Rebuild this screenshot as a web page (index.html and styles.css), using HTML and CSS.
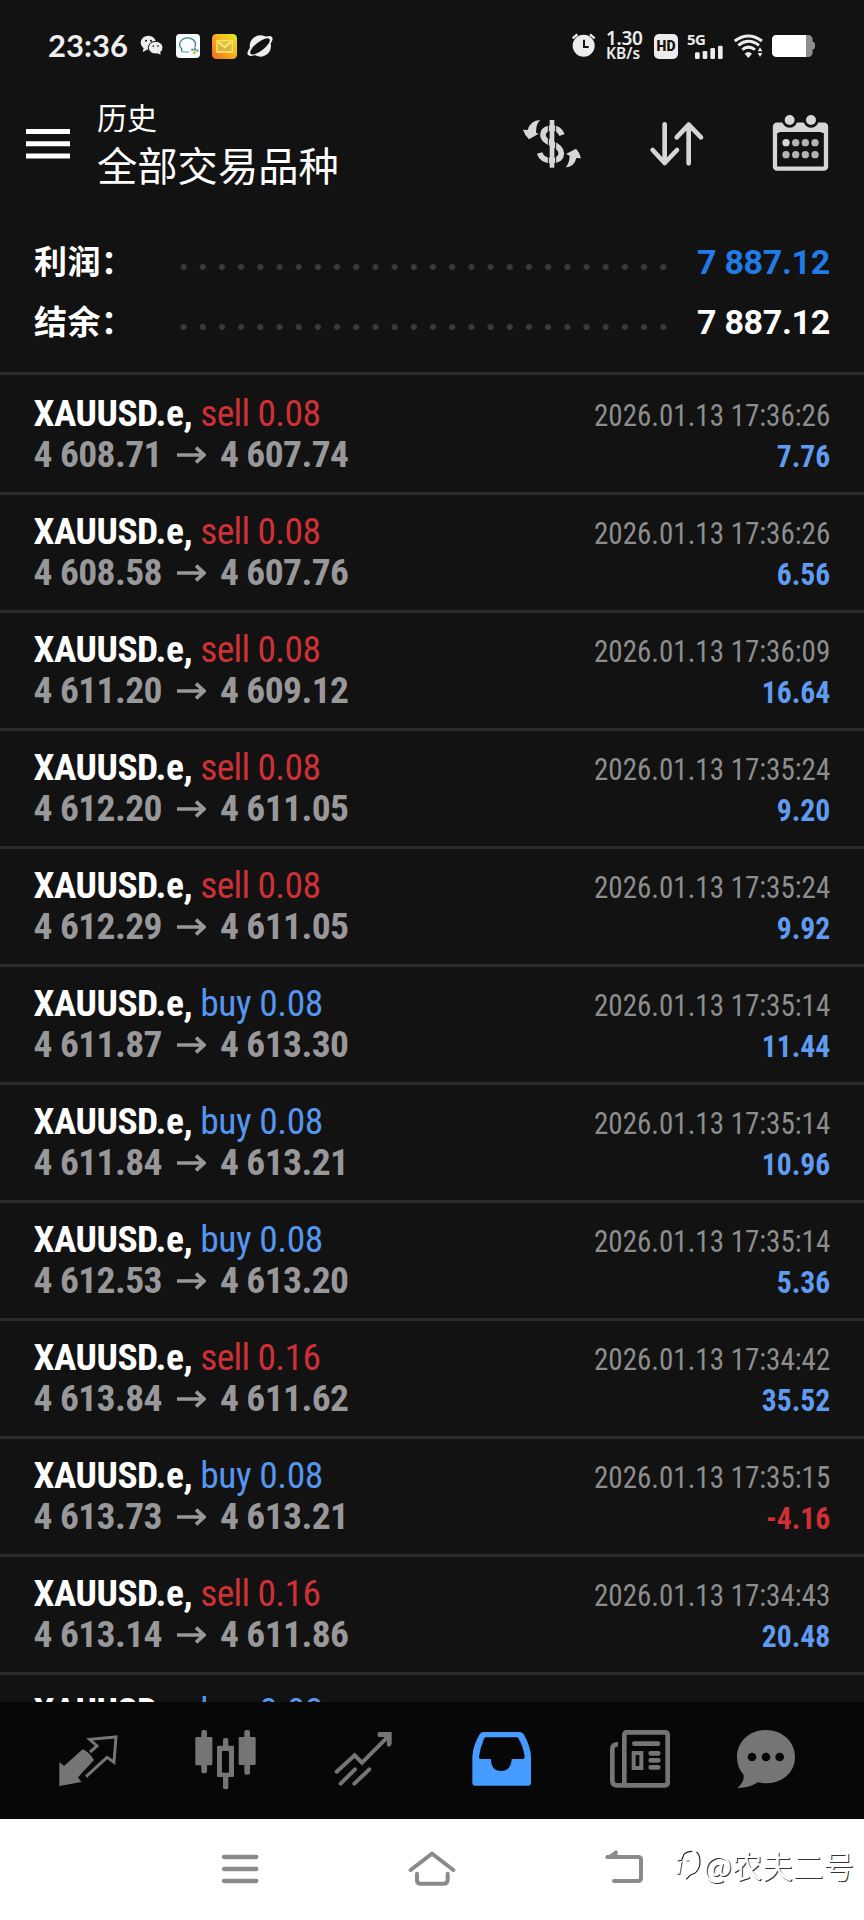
FILE: index.html
```html
<!DOCTYPE html>
<html lang="zh-CN">
<head>
<meta charset="utf-8">
<title>历史</title>
<link rel="stylesheet" href="styles.css">
</head>
<body>
<div class="statusbar">
  <div class="status-left">
    <span class="clock">23:36</span>
    <svg class="ic wechat" width="24" height="24" viewBox="423 105 72 72"><g fill="#ededed"><ellipse cx="448" cy="131" rx="23" ry="21"/><path d="M434 146l-3 13 14-7z"/></g><ellipse cx="470" cy="146" rx="22" ry="19" fill="#ededed" stroke="#121212" stroke-width="3"/><path d="M474 162l11 5-2-10z" fill="#ededed"/><g fill="#121212"><circle cx="441" cy="125" r="3"/><circle cx="456" cy="125" r="3"/><circle cx="463" cy="141" r="2.6"/><circle cx="477" cy="141" r="2.6"/></g></svg>
    <svg class="ic app" width="24" height="24" viewBox="0 0 72 72"><rect width="72" height="72" rx="11" fill="#fbfdfd"/><path d="M17 53V45A24 20 0 1 1 56 41" fill="none" stroke="#3f7fa0" stroke-width="4"/><path d="M17 54h23" stroke="#8cb9a8" stroke-width="4"/><circle cx="57" cy="46" r="4" fill="#5a8d9a"/><circle cx="64" cy="50" r="4" fill="#7fb08a"/><circle cx="55" cy="56" r="5" fill="#d8c94e"/><circle cx="49" cy="47" r="3.5" fill="#3f9aa0"/></svg>
    <svg class="ic mail" width="25" height="25" viewBox="0 0 75 75"><defs><linearGradient id="mailbg" x1="0" y1="1" x2="1" y2="0"><stop offset="0" stop-color="#ec6c25"/><stop offset=".5" stop-color="#f6ab1c"/><stop offset="1" stop-color="#e3ee2a"/></linearGradient></defs><rect width="75" height="75" rx="13" fill="url(#mailbg)"/><rect x="15" y="20" width="46" height="34" fill="#d9b545" stroke="#fbe25a" stroke-width="5"/><path d="M18 24l20 16 20-16" fill="#e8c33c" stroke="#fff06a" stroke-width="5"/></svg>
    <svg class="ic planet" width="26" height="24" viewBox="0 0 78 72"><circle cx="40" cy="36" r="32" fill="#eee"/><ellipse cx="39" cy="36" rx="45" ry="17" transform="rotate(-36 39 36)" fill="#eee"/><ellipse cx="39" cy="37" rx="36" ry="13" transform="rotate(-38 39 37)" fill="#121212"/></svg>
  </div>
  <div class="status-right">
    <svg width="26" height="26" viewBox="417 102 78 78"><circle cx="455" cy="140" r="33" fill="#ececec"/><path d="M422 118l14-12M488 118l-14-12" stroke="#ececec" stroke-width="7"/><path d="M456 122v22h14" fill="none" stroke="#121212" stroke-width="6"/></svg>
    <div class="speed"><span class="num">1.30</span><span class="unit">KB/s</span></div>
    <div class="hd">HD</div>
    <div class="signal"><span>5G</span><svg width="30" height="14" viewBox="0 0 90 42"><g fill="#ececec"><rect x="3" y="22" width="14" height="20" rx="4"/><rect x="26" y="18" width="14" height="24" rx="4"/><rect x="49" y="9" width="14" height="33" rx="4"/><rect x="72" y="2" width="14" height="40" rx="4"/></g></svg></div>
    <svg class="wifi" width="30" height="25" viewBox="904 102 90 75"><g fill="none" stroke="#ececec" stroke-width="9"><path d="M909 123Q950 93 991 123"/><path d="M920 136Q950 112 982 136"/><path d="M932 149Q950 134 970 149"/></g><path d="M939 161q11-10 22 0l-11 13z" fill="#ececec"/><path d="M978 154l7-12 7 12zM978 159l7 12 7-12z" fill="#ececec"/></svg>
    <svg class="battery" width="44" height="22" viewBox="0 0 132 66"><path d="M100 0h10q10 2 12 12v9h3q4 1 4 6v10q0 5-4 6h-3v11q-2 10-12 12h-10z" fill="#8e8e8e"/><path d="M12 0h90v66H12Q1 65 0 54V12Q1 1 12 0z" fill="#fff"/></svg>
  </div>
</div>

<header class="header">
  <svg class="burger" width="44" height="30" viewBox="0 0 44 30"><path d="M0 2.6h44M0 14.8h44M0 27h44" stroke="#fff" stroke-width="5"/></svg>
  <div class="titles"><div class="subtitle">历史</div><div class="title">全部交易品种</div></div>
  <div class="actions">
    <svg class="money" width="60" height="52" viewBox="270 354 180 156"><g fill="none" stroke="#d6d6d6"><path d="M360 360v143" stroke-width="14"/><path d="M390 405Q382 384 360 384Q333 386 333 406Q333 420 358 430Q387 441 388 460Q387 480 360 482Q330 482 323 459" stroke-width="17"/><path d="M349 374V492M371 374V492" stroke="#121212" stroke-width="3"/></g><g fill="#d6d6d6"><path d="M325 360q-13 10-13 38l8 3-29 17q-13-12-18-29l14 1q8-29 38-30z"/><path d="M399 503q13-10 14-36l-11-5 30-16q11 11 15 29l-14-1q-6 28-34 28z"/></g></svg>
    <svg class="sort" width="56" height="46" viewBox="651 363 168 138"><g fill="none" stroke="#d6d6d6" stroke-width="14" stroke-linecap="round" stroke-linejoin="round"><path d="M698 373v116M662 450l36 39 37-39M770 490V374M734 412l36-38 37 38"/></g></svg>
    <svg class="calendar" width="57" height="58" viewBox="1020 342 171 174"><rect x="1029" y="374" width="153" height="132" rx="6" fill="none" stroke="#d6d6d6" stroke-width="13"/><path d="M1030 373h151v26H1030z" fill="#d6d6d6"/><rect x="1037" y="396" width="136" height="100" rx="9" fill="#121212"/><g fill="#d6d6d6" stroke="#121212" stroke-width="8"><circle cx="1073" cy="360" r="19"/><circle cx="1137" cy="360" r="19"/></g><g fill="#b4b4b4"><circle cx="1062" cy="428" r="11" fill="#d6d6d6"/><circle cx="1091" cy="428" r="11"/><circle cx="1120" cy="428" r="11"/><circle cx="1149" cy="428" r="11"/><circle cx="1062" cy="464" r="11"/><circle cx="1091" cy="464" r="11"/><circle cx="1120" cy="464" r="11"/><circle cx="1149" cy="464" r="11"/></g></svg>
  </div>
</header>

<section class="summary">
  <div class="sum-row"><span class="label">利润：</span><span class="dots"></span><span class="amount blue">7 887.12</span></div>
  <div class="sum-row"><span class="label">结余：</span><span class="dots"></span><span class="amount">7 887.12</span></div>
</section>

<main class="deals">
  <svg class="defs" width="0" height="0"><symbol id="arrow" viewBox="0 0 87 54"><path d="M0 27h80M57 5l24 22-24 22" fill="none" stroke="currentColor" stroke-width="11"/></symbol></svg>
  <div class="deal"><div class="info"><div class="name"><b>XAUUSD.e,</b> <span class="sell">sell 0.08</span></div><div class="price">4 608.71<svg><use href="#arrow"/></svg>4 607.74</div></div><div class="result"><div class="date">2026.01.13 17:36:26</div><div class="value">7.76</div></div></div>
  <div class="deal"><div class="info"><div class="name"><b>XAUUSD.e,</b> <span class="sell">sell 0.08</span></div><div class="price">4 608.58<svg><use href="#arrow"/></svg>4 607.76</div></div><div class="result"><div class="date">2026.01.13 17:36:26</div><div class="value">6.56</div></div></div>
  <div class="deal"><div class="info"><div class="name"><b>XAUUSD.e,</b> <span class="sell">sell 0.08</span></div><div class="price">4 611.20<svg><use href="#arrow"/></svg>4 609.12</div></div><div class="result"><div class="date">2026.01.13 17:36:09</div><div class="value">16.64</div></div></div>
  <div class="deal"><div class="info"><div class="name"><b>XAUUSD.e,</b> <span class="sell">sell 0.08</span></div><div class="price">4 612.20<svg><use href="#arrow"/></svg>4 611.05</div></div><div class="result"><div class="date">2026.01.13 17:35:24</div><div class="value">9.20</div></div></div>
  <div class="deal"><div class="info"><div class="name"><b>XAUUSD.e,</b> <span class="sell">sell 0.08</span></div><div class="price">4 612.29<svg><use href="#arrow"/></svg>4 611.05</div></div><div class="result"><div class="date">2026.01.13 17:35:24</div><div class="value">9.92</div></div></div>
  <div class="deal"><div class="info"><div class="name"><b>XAUUSD.e,</b> <span class="buy">buy 0.08</span></div><div class="price">4 611.87<svg><use href="#arrow"/></svg>4 613.30</div></div><div class="result"><div class="date">2026.01.13 17:35:14</div><div class="value">11.44</div></div></div>
  <div class="deal"><div class="info"><div class="name"><b>XAUUSD.e,</b> <span class="buy">buy 0.08</span></div><div class="price">4 611.84<svg><use href="#arrow"/></svg>4 613.21</div></div><div class="result"><div class="date">2026.01.13 17:35:14</div><div class="value">10.96</div></div></div>
  <div class="deal"><div class="info"><div class="name"><b>XAUUSD.e,</b> <span class="buy">buy 0.08</span></div><div class="price">4 612.53<svg><use href="#arrow"/></svg>4 613.20</div></div><div class="result"><div class="date">2026.01.13 17:35:14</div><div class="value">5.36</div></div></div>
  <div class="deal"><div class="info"><div class="name"><b>XAUUSD.e,</b> <span class="sell">sell 0.16</span></div><div class="price">4 613.84<svg><use href="#arrow"/></svg>4 611.62</div></div><div class="result"><div class="date">2026.01.13 17:34:42</div><div class="value">35.52</div></div></div>
  <div class="deal"><div class="info"><div class="name"><b>XAUUSD.e,</b> <span class="buy">buy 0.08</span></div><div class="price">4 613.73<svg><use href="#arrow"/></svg>4 613.21</div></div><div class="result"><div class="date">2026.01.13 17:35:15</div><div class="value loss">-4.16</div></div></div>
  <div class="deal"><div class="info"><div class="name"><b>XAUUSD.e,</b> <span class="sell">sell 0.16</span></div><div class="price">4 613.14<svg><use href="#arrow"/></svg>4 611.86</div></div><div class="result"><div class="date">2026.01.13 17:34:43</div><div class="value">20.48</div></div></div>
  <div class="deal"><div class="info"><div class="name"><b>XAUUSD.e,</b> <span class="buy">buy 0.08</span></div></div></div>
</main>

<nav class="tabs">
  <svg viewBox="174 204 186 186"><path d="M178 378V306l14 12 56-50q20 8 34 32l-48 52 10 14z" fill="#757575"/><path d="M270 276l21-18-22-20 79-7-6 76-21-15-63 58" fill="none" stroke="#757575" stroke-width="9"/></svg>
  <svg viewBox="585 204 186 186"><g fill="#757575"><rect x="586" y="231" width="51" height="85" rx="4"/><rect x="604" y="210" width="17" height="130" rx="6"/><rect x="716" y="231" width="51" height="84" rx="4"/><rect x="733" y="210" width="17" height="134" rx="6"/><rect x="651" y="257" width="51" height="94" rx="4"/><rect x="669" y="234" width="16" height="154" rx="6"/></g><rect x="666" y="273" width="21" height="65" rx="3" fill="#070707"/></svg>
  <svg viewBox="999 204 186 186"><path d="M1010 335l54-49 22 22 82-82M1022 371l43-43M1063 371l45-43" fill="none" stroke="#757575" stroke-width="12" stroke-linecap="round"/><path d="M1135 216h40v36l-6 8-8-2v-16l-10-11h-16l-3-7z" fill="#757575"/></svg>
  <svg viewBox="117 204 186 186"><path d="M154 216h110q8 0 12 8 20 36 21 66v78q0 9-9 9H130q-9 0-9-9v-78q2-34 21-66 4-8 12-8z" fill="#459bff"/><path d="M162 232h92q4 0 6 4 14 24 18 54 0 7-6 7h-33q-2 36-32 36t-30-36h-31q-6 0-5-7 4-28 15-54 2-4 6-4z" fill="#070707"/></svg>
  <svg viewBox="531 204 186 186"><g fill="none" stroke="#757575" stroke-width="14"><rect x="577" y="217" width="130" height="159" rx="7"/><path d="M558 253q-17-1-17 14v95q0 14 16 14h30"/></g><g fill="none" stroke="#757575" stroke-width="14" stroke-linecap="round"><path d="M607 251h71M656 280h23M656 301h23M656 322h23"/></g><rect x="605" y="279" width="23" height="45" fill="none" stroke="#757575" stroke-width="12"/></svg>
  <svg viewBox="912 204 186 186"><path d="M1002 210c48 0 87 34 87 81s-39 79-87 79q-12 0-24-3-28 18-62 17 21-18 19-39-20-22-20-54c0-47 39-81 87-81z" fill="#757575"/><g fill="#070707"><circle cx="960" cy="291" r="13"/><circle cx="1002" cy="291" r="13"/><circle cx="1043" cy="291" r="13"/></g></svg>
</nav>

<footer class="sysnav">
  <svg class="menu" width="38" height="32" viewBox="663 582 114 96"><path d="M672 594h97M672 630h97M672 666h97" stroke="#8a8a8a" stroke-width="13" stroke-linecap="round"/></svg>
  <svg class="home" width="48" height="38" viewBox="0 0 144 114"><path d="M8 63L72 14l64 49M27 74v20q0 10 10 10h70q12 0 12-12V74" fill="none" stroke="#8a8a8a" stroke-width="12" stroke-linecap="round" stroke-linejoin="round"/></svg>
  <svg class="back" width="40" height="36" viewBox="516 570 120 108"><path d="M526 594h92q9 0 9 8v54q0 10-10 10h-71" fill="none" stroke="#8a8a8a" stroke-width="12" stroke-linecap="round"/><path d="M519 597l33-24q7 3 5 12l-8 10z" fill="#8a8a8a"/></svg>
  <div class="mark"><svg width="26" height="36" viewBox="0 0 78 108" fill="none" stroke="#222" stroke-width="3.5"><path d="M8 48L20 46L27 28Q36 19 52 19"/><path d="M22 50L15 88M7 88h9M34 48h10" stroke="#666"/><path d="M64 21Q78 30 74 62Q68 86 46 90L34 103"/></svg><span>@农夫二号</span></div>
</footer>
</body>
</html>
```
FILE: styles.css
```css
* { box-sizing: border-box; }
body {
  margin: 0;
  width: 864px;
  height: 1920px;
  overflow: hidden;
  display: flex;
  flex-direction: column;
  background: #121212;
  color: #fff;
  font-family: Roboto, "Noto Sans CJK SC", sans-serif;
}
svg { display: block; flex: none; }

.statusbar {
  flex: none;
  height: 92px;
  padding: 0 48px;
  display: flex;
  justify-content: space-between;
  align-items: center;
}
.status-left, .status-right { display: flex; align-items: center; height: 30px; }
.clock { width: 92px; font: 700 31px/30px Lato, sans-serif; color: #eee; padding-bottom: 2px; }
.wechat { margin-right: 12px; }
.app { margin-right: 12px; }
.mail { margin-right: 10px; }

.speed {
  width: 38px;
  margin-left: 9px;
  display: flex;
  flex-direction: column;
  font-family: "Noto Sans", sans-serif;
  font-weight: 600;
  color: #ececec;
}
.speed .num { font-size: 19px; line-height: 15px; letter-spacing: -.3px; }
.speed .unit { font-size: 15.5px; line-height: 15px; }
.hd {
  width: 24px;
  height: 25px;
  margin-left: 10px;
  border-radius: 5px;
  background: #ececec;
  color: #121212;
  font: 900 14px/25px Roboto, sans-serif;
  text-align: center;
}
.signal {
  width: 38px;
  height: 26px;
  margin-left: 9px;
  color: #ececec;
  font: 700 15px/12px "Noto Sans", sans-serif;
  letter-spacing: -.6px;
  display: flex;
  flex-direction: column;
}
.signal svg { margin-left: 7px; }
.wifi { margin-left: 8px; }
.battery { margin-left: 9px; }

.header { flex: none; height: 132px; display: flex; align-items: flex-start; padding-left: 26px; }
.burger { margin-top: 37px; }
.titles { width: 245px; margin-left: 27px; padding-top: 5px; white-space: nowrap; }
.subtitle { font-size: 30px; line-height: 44px; }
.title { font-size: 40.3px; line-height: 54px; }
.actions { flex: 1; display: flex; align-items: flex-start; }
.money { margin: 26px 0 0 180px; }
.sort { margin: 29px 0 0 67px; }
.calendar { margin: 22px 0 0 67px; }

.summary { flex: none; height: 148px; padding: 8px 34px 0; }
.sum-row { height: 60px; display: flex; align-items: center; }
.label { width: 140px; padding-bottom: 3px; font: 700 33px/57px "Noto Sans CJK SC", sans-serif; letter-spacing: .4px; white-space: nowrap; }
.dots {
  width: 500px;
  height: 8px;
  margin-top: 10px;
  background: radial-gradient(circle at 50% 50%, #3b3b3b 2.4px, transparent 3.6px) 0 0 / 19.2px 8px repeat-x;
}
.amount { margin-left: auto; font-weight: 700; font-size: 34px; letter-spacing: -.3px; }
.blue { color: #227ae6; }

.deals { height: 1330px; flex: none; overflow: hidden; background: #121212; }
.defs { position: absolute; }
.deal {
  height: 118px;
  border-top: 3px solid #2b2b2b;
  padding: 16px 33.5px 0;
  display: flex;
  justify-content: space-between;
  align-items: baseline;
  font-family: "Roboto Condensed", Roboto, sans-serif;
  font-stretch: 75%;
  line-height: 41px;
  white-space: nowrap;
}
.deal:nth-of-type(1) { height: 120px; padding-top: 18px; }
.name { font-size: 37.5px; letter-spacing: -.5px; }
.sell { color: #cf3035; letter-spacing: -.65px; }
.buy { color: #5596ee; letter-spacing: -.45px; }
.price { display: flex; align-items: center; font-size: 37.5px; font-weight: 700; letter-spacing: -.6px; color: #98979a; }
.price svg { width: 29px; height: 18px; margin: 0 14px 0 15px; }
.result { text-align: right; font-size: 31.5px; }
.date { color: #8d8d8d; transform: scaleX(.922); transform-origin: right; }
.value { color: #5f9bf0; font-weight: 700; transform: scaleX(.94); transform-origin: right; }
.value.loss { color: #cf3035; }

.tabs {
  flex: none;
  height: 117px;
  padding: 26px 0 0 58px;
  display: grid;
  grid-template-columns: 137px 138px 138px 138px 127px 62px;
  background: #070707;
}
.tabs svg { width: 62px; height: 62px; }

.sysnav { flex: none; height: 101px; background: #fff; display: flex; align-items: flex-start; padding-left: 221px; }
.menu { margin-top: 34px; }
.home { margin: 30px 0 0 149px; }
.back { margin: 30px 0 0 148px; }
.mark { display: flex; margin: 26px 0 0 31px; white-space: nowrap; }
.mark span {
  margin-left: 2px;
  font: 400 30.5px/40px "Noto Sans CJK SC", sans-serif;
  color: #fff;
  text-shadow: 1px 1px 0 #333;
}
```
